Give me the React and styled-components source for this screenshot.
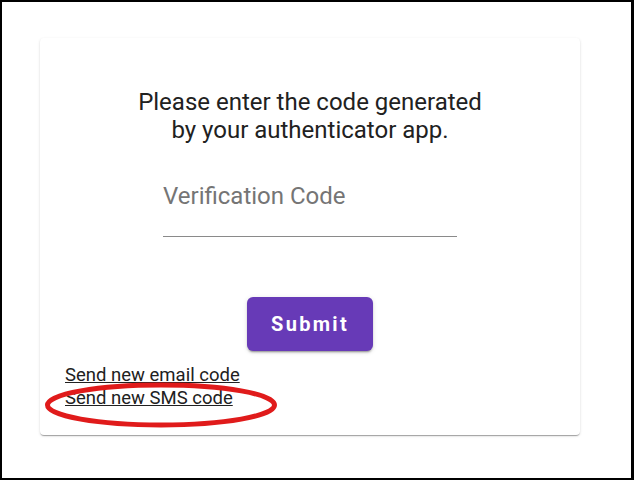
import React from 'react';
import styled, { createGlobalStyle } from 'styled-components';

const GlobalStyle = createGlobalStyle`
  html, body {
    margin: 0;
    padding: 0;
    background: #fff;
  }
  body {
    font-family: Roboto, "Liberation Sans", sans-serif;
  }
`;

const Frame = styled.div`
  box-sizing: border-box;
  width: 634px;
  height: 480px;
  border: 2px solid #000;
  border-right-width: 3px;
  padding: 36px 52px 0 38px;
  background: #fff;
`;

const Card = styled.div`
  box-sizing: border-box;
  width: 540px;
  height: 397px;
  border-radius: 4px;
  background: #fff;
  box-shadow: 0 2px 1px -1px rgba(0, 0, 0, 0.2), 0 1px 1px 0 rgba(0, 0, 0, 0.14),
    0 1px 3px 0 rgba(0, 0, 0, 0.12);
  padding: 50px 25px 0;
  display: flex;
  flex-direction: column;
`;

const Prompt = styled.p`
  margin: 0;
  text-align: center;
  font-size: 24px;
  line-height: 28px;
  color: #212121;
`;

const Field = styled.label`
  display: block;
  align-self: center;
  width: 294px;
  margin-top: 38px;
  padding-bottom: 26px;
  border-bottom: 1px solid #8a8a8a;
  font-size: 24px;
  line-height: 28px;
  color: #757575;
`;

const Actions = styled.div`
  display: flex;
  justify-content: center;
  margin-top: 60px;
`;

const SubmitButton = styled.button`
  width: 126px;
  height: 54px;
  border: none;
  border-radius: 6px;
  background: #673ab7;
  color: #fff;
  font-family: Roboto, "Liberation Sans", sans-serif;
  font-weight: 700;
  font-size: 20px;
  letter-spacing: 2.3px;
  box-shadow: 0 3px 1px -2px rgba(0, 0, 0, 0.2), 0 2px 2px 0 rgba(0, 0, 0, 0.14),
    0 1px 5px 0 rgba(0, 0, 0, 0.12);
  cursor: pointer;
`;

const Links = styled.div`
  position: relative;
  display: flex;
  flex-direction: column;
  align-items: flex-start;
  margin-top: 13px;
`;

const LinkText = styled.a`
  font-size: 18.5px;
  line-height: 23px;
  color: #212121;
  text-decoration: underline;
  cursor: pointer;
`;

const Highlight = styled.svg`
  position: absolute;
  left: -21px;
  top: 18px;
  overflow: visible;
  pointer-events: none;
`;

export default function App() {
  return (
    <>
      <GlobalStyle />
      <Frame>
        <Card>
          <Prompt>
            Please enter the code generated
            <br />
            by your authenticator app.
          </Prompt>
          <Field>Verification Code</Field>
          <Actions>
            <SubmitButton>Submit</SubmitButton>
          </Actions>
          <Links>
            <LinkText>Send new email code</LinkText>
            <LinkText>Send new SMS code</LinkText>
            <Highlight width="234" height="46" viewBox="0 0 234 46">
              <ellipse cx="117" cy="23" rx="113.5" ry="20" fill="none" stroke="#e01b1b" strokeWidth="5" />
            </Highlight>
          </Links>
        </Card>
      </Frame>
    </>
  );
}
